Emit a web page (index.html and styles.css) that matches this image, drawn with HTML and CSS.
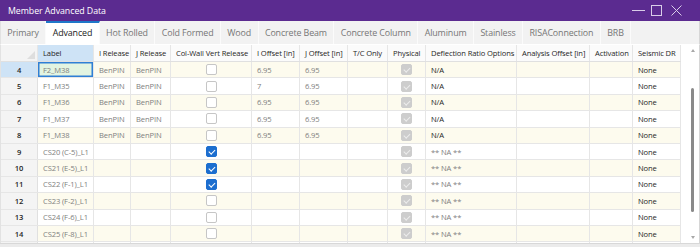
FILE: index.html
```html
<!DOCTYPE html>
<html lang="en">
<head>
    <meta charset="UTF-8">
    <meta name="viewport" content="width=device-width, initial-scale=1.0">
    <title>Member Advanced Data</title>
    <link rel="stylesheet" href="styles.css">
</head>
<body>

<div class="window">

    <!-- Title Bar -->
    <div class="title-bar">
        <span class="title">Member Advanced Data</span>
        <div class="window-controls">
            <svg class="ctl-min" width="13" height="11" viewBox="0 0 13 11"><path d="M0 5.5 H13" stroke="#d9cde8" stroke-width="1"/></svg>
            <svg class="ctl-max" width="11" height="11" viewBox="0 0 11 11"><rect x="0.5" y="0.5" width="10" height="10" fill="none" stroke="#d9cde8" stroke-width="1"/></svg>
            <svg class="ctl-close" width="11" height="11" viewBox="0 0 11 11"><path d="M0.5 0.5 L10.5 10.5 M10.5 0.5 L0.5 10.5" stroke="#d9cde8" stroke-width="1"/></svg>
        </div>
    </div>

    <!-- Tabs -->
    <div class="tabs">
        <div class="tab">Primary</div>
        <div class="tab active">Advanced</div>
        <div class="tab">Hot Rolled</div>
        <div class="tab">Cold Formed</div>
        <div class="tab">Wood</div>
        <div class="tab">Concrete Beam</div>
        <div class="tab">Concrete Column</div>
        <div class="tab">Aluminum</div>
        <div class="tab">Stainless</div>
        <div class="tab">RISAConnection</div>
        <div class="tab">BRB</div>
    </div>

    <!-- Grid -->
    <div class="grid-area">
        <div class="grid">
            <div class="grid-row header-row">
                <div class="cell corner"></div>
                <div class="cell active-col">Label</div>
                <div class="cell">I Release</div>
                <div class="cell">J Release</div>
                <div class="cell">Col-Wall Vert Release</div>
                <div class="cell">I Offset [in]</div>
                <div class="cell">J Offset [in]</div>
                <div class="cell">T/C Only</div>
                <div class="cell">Physical</div>
                <div class="cell">Deflection Ratio Options</div>
                <div class="cell">Analysis Offset [in]</div>
                <div class="cell">Activation</div>
                <div class="cell">Seismic DR</div>
            </div>

            <div class="grid-row cream">
                <div class="cell row-num active-row">4</div>
                <div class="cell muted current">F2_M38</div>
                <div class="cell muted">BenPIN</div>
                <div class="cell muted">BenPIN</div>
                <div class="cell center"><span class="check"></span></div>
                <div class="cell muted">6.95</div>
                <div class="cell muted">6.95</div>
                <div class="cell"></div>
                <div class="cell center"><span class="check disabled"></span></div>
                <div class="cell">N/A</div>
                <div class="cell"></div>
                <div class="cell"></div>
                <div class="cell">None</div>
            </div>
            <div class="grid-row">
                <div class="cell row-num">5</div>
                <div class="cell muted">F1_M35</div>
                <div class="cell muted">BenPIN</div>
                <div class="cell muted">BenPIN</div>
                <div class="cell center"><span class="check"></span></div>
                <div class="cell muted">7</div>
                <div class="cell muted">6.95</div>
                <div class="cell"></div>
                <div class="cell center"><span class="check disabled"></span></div>
                <div class="cell">N/A</div>
                <div class="cell"></div>
                <div class="cell"></div>
                <div class="cell">None</div>
            </div>
            <div class="grid-row cream">
                <div class="cell row-num">6</div>
                <div class="cell muted">F1_M36</div>
                <div class="cell muted">BenPIN</div>
                <div class="cell muted">BenPIN</div>
                <div class="cell center"><span class="check"></span></div>
                <div class="cell muted">6.95</div>
                <div class="cell muted">6.95</div>
                <div class="cell"></div>
                <div class="cell center"><span class="check disabled"></span></div>
                <div class="cell">N/A</div>
                <div class="cell"></div>
                <div class="cell"></div>
                <div class="cell">None</div>
            </div>
            <div class="grid-row">
                <div class="cell row-num">7</div>
                <div class="cell muted">F1_M37</div>
                <div class="cell muted">BenPIN</div>
                <div class="cell muted">BenPIN</div>
                <div class="cell center"><span class="check"></span></div>
                <div class="cell muted">6.95</div>
                <div class="cell muted">6.95</div>
                <div class="cell"></div>
                <div class="cell center"><span class="check disabled"></span></div>
                <div class="cell">N/A</div>
                <div class="cell"></div>
                <div class="cell"></div>
                <div class="cell">None</div>
            </div>
            <div class="grid-row cream">
                <div class="cell row-num">8</div>
                <div class="cell muted">F1_M38</div>
                <div class="cell muted">BenPIN</div>
                <div class="cell muted">BenPIN</div>
                <div class="cell center"><span class="check"></span></div>
                <div class="cell muted">6.95</div>
                <div class="cell muted">6.95</div>
                <div class="cell"></div>
                <div class="cell center"><span class="check disabled"></span></div>
                <div class="cell">N/A</div>
                <div class="cell"></div>
                <div class="cell"></div>
                <div class="cell">None</div>
            </div>
            <div class="grid-row">
                <div class="cell row-num">9</div>
                <div class="cell muted">CS20 (C-5)_L1</div>
                <div class="cell"></div>
                <div class="cell"></div>
                <div class="cell center"><span class="check on"></span></div>
                <div class="cell"></div>
                <div class="cell"></div>
                <div class="cell"></div>
                <div class="cell center"><span class="check disabled"></span></div>
                <div class="cell muted">** NA **</div>
                <div class="cell"></div>
                <div class="cell"></div>
                <div class="cell">None</div>
            </div>
            <div class="grid-row cream">
                <div class="cell row-num">10</div>
                <div class="cell muted">CS21 (E-5)_L1</div>
                <div class="cell"></div>
                <div class="cell"></div>
                <div class="cell center"><span class="check on"></span></div>
                <div class="cell"></div>
                <div class="cell"></div>
                <div class="cell"></div>
                <div class="cell center"><span class="check disabled"></span></div>
                <div class="cell muted">** NA **</div>
                <div class="cell"></div>
                <div class="cell"></div>
                <div class="cell">None</div>
            </div>
            <div class="grid-row">
                <div class="cell row-num">11</div>
                <div class="cell muted">CS22 (F-1)_L1</div>
                <div class="cell"></div>
                <div class="cell"></div>
                <div class="cell center"><span class="check on"></span></div>
                <div class="cell"></div>
                <div class="cell"></div>
                <div class="cell"></div>
                <div class="cell center"><span class="check disabled"></span></div>
                <div class="cell muted">** NA **</div>
                <div class="cell"></div>
                <div class="cell"></div>
                <div class="cell">None</div>
            </div>
            <div class="grid-row cream">
                <div class="cell row-num">12</div>
                <div class="cell muted">CS23 (F-2)_L1</div>
                <div class="cell"></div>
                <div class="cell"></div>
                <div class="cell center"><span class="check"></span></div>
                <div class="cell"></div>
                <div class="cell"></div>
                <div class="cell"></div>
                <div class="cell center"><span class="check disabled"></span></div>
                <div class="cell muted">** NA **</div>
                <div class="cell"></div>
                <div class="cell"></div>
                <div class="cell">None</div>
            </div>
            <div class="grid-row">
                <div class="cell row-num">13</div>
                <div class="cell muted">CS24 (F-6)_L1</div>
                <div class="cell"></div>
                <div class="cell"></div>
                <div class="cell center"><span class="check"></span></div>
                <div class="cell"></div>
                <div class="cell"></div>
                <div class="cell"></div>
                <div class="cell center"><span class="check disabled"></span></div>
                <div class="cell muted">** NA **</div>
                <div class="cell"></div>
                <div class="cell"></div>
                <div class="cell">None</div>
            </div>
            <div class="grid-row cream">
                <div class="cell row-num">14</div>
                <div class="cell muted">CS25 (F-8)_L1</div>
                <div class="cell"></div>
                <div class="cell"></div>
                <div class="cell center"><span class="check"></span></div>
                <div class="cell"></div>
                <div class="cell"></div>
                <div class="cell"></div>
                <div class="cell center"><span class="check disabled"></span></div>
                <div class="cell muted">** NA **</div>
                <div class="cell"></div>
                <div class="cell"></div>
                <div class="cell">None</div>
            </div>
            <div class="grid-row">
                <div class="cell row-num"></div>
                <div class="cell"></div>
                <div class="cell"></div>
                <div class="cell"></div>
                <div class="cell center"><span class="check"></span></div>
                <div class="cell"></div>
                <div class="cell"></div>
                <div class="cell"></div>
                <div class="cell center"><span class="check disabled"></span></div>
                <div class="cell"></div>
                <div class="cell"></div>
                <div class="cell"></div>
                <div class="cell"></div>
            </div>
        </div>

        <!-- Vertical Scrollbar -->
        <div class="v-scroll">
            <span class="arrow up"></span>
            <span class="thumb"></span>
            <span class="arrow down"></span>
        </div>
    </div>

    <!-- Horizontal Scrollbar edge -->
    <div class="h-scroll"></div>
</div>

</body>
</html>
```

FILE: styles.css
```css
/* Colors */
:root {
    --title-bg: #5b2b90;
    --tab-bg: #f2f2f2;
    --line: #e6e6e6;
    --cream: #fdfbee;
    --head-bg: #fbfbfb;
    --sel-blue: #cee3f6;
    --text: #262626;
    --muted: #808080;
}

body {
    margin: 0;
    font-family: "Open Sans", "Noto Sans", sans-serif;
    background-color: #ffffff;
    color: var(--text);
    overflow: hidden;
}

.window {
    width: 700px;
    height: 247px;
    display: flex;
    flex-direction: column;
}

/* Title Bar */
.title-bar {
    height: 21px;
    flex-shrink: 0;
    background-color: var(--title-bg);
    color: #ffffff;
    display: flex;
    align-items: center;
    justify-content: space-between;
    padding: 0 18px 0 8px;
}

.title {
    font-size: 8.8px;
    letter-spacing: -0.05px;
}

.window-controls {
    display: flex;
    align-items: center;
}

.ctl-min {
    margin-right: 6px;
}

.ctl-max {
    margin-right: 9px;
}

/* Tabs */
.tabs {
    height: 23px;
    flex-shrink: 0;
    display: flex;
    background-color: var(--tab-bg);
    border-left: 1px solid #e2e2e2;
    border-right: 1px solid #d6d6d6;
}

.tab {
    display: flex;
    align-items: center;
    padding: 0 6.5px 0 6.3px;
    font-size: 8.9px;
    letter-spacing: -0.12px;
    color: #767676;
    border-right: 1px solid #fbfbfb;
}

.tab.active {
    background-color: #ffffff;
    color: #1a1a1a;
    border-top: 2px solid #1f77c9;
    padding-bottom: 2px;
}

/* Grid */
.grid-area {
    height: 199px;
    flex-shrink: 0;
    display: flex;
    overflow: hidden;
    border-top: 1px solid #ffffff;
    box-sizing: border-box;
    border-left: 1px solid #e2e2e2;
    border-right: 1px solid #d6d6d6;
}

.grid {
    width: 680px;
    flex-shrink: 0;
    overflow: hidden;
}

.grid-row {
    display: grid;
    grid-template-columns: 37px 56px 37px 40px 81px 48px 48px 40px 38px 91px 73px 43px 48px;
    height: 16.4px;
    box-sizing: border-box;
    border-bottom: 1px solid var(--line);
}

.grid-row.cream {
    background-color: var(--cream);
}

.header-row {
    height: 17px;
    background-color: var(--head-bg);
    border-bottom-color: #e0e0e0;
}

.cell {
    display: flex;
    align-items: center;
    padding-left: 5px;
    font-size: 7.6px;
    letter-spacing: -0.12px;
    white-space: nowrap;
    overflow: hidden;
    border-right: 1px solid var(--line);
}

.cell.center {
    justify-content: center;
    padding-left: 0;
}

.cell.muted {
    color: var(--muted);
}

.header-row .cell {
    color: #1f1f1f;
}

.cell.active-col {
    background-color: var(--sel-blue);
}

.cell.corner {
    position: relative;
    background-color: #f4f4f4;
}

.cell.corner::after {
    content: "";
    position: absolute;
    right: 2px;
    bottom: 2px;
    border-left: 8px solid transparent;
    border-bottom: 8px solid #dedede;
}

.row-num {
    justify-content: center;
    padding-left: 0;
    background-color: #f4f4f4;
    font-weight: 600;
    color: #262626;
    border-right-color: #e0e0e0;
}

.row-num.active-row {
    background-color: var(--sel-blue);
}

.cell.current {
    background-color: #e3f4e1;
    box-shadow: inset 0 0 0 1.5px #2f7fd5;
}

/* Checkboxes */
.check {
    position: relative;
    width: 11px;
    height: 11px;
    box-sizing: border-box;
    border: 1px solid #c6c6c6;
    border-radius: 2px;
    background-color: #ffffff;
}

.check.on {
    background-color: #1c6ecf;
    border-color: #1c6ecf;
}

.check.disabled {
    background-color: #cdcdcd;
    border-color: #cdcdcd;
}

.check.on::after,
.check.disabled::after {
    content: "";
    position: absolute;
    left: 3px;
    top: 1px;
    width: 2.5px;
    height: 5px;
    border: solid #ffffff;
    border-width: 0 1.1px 1.1px 0;
    transform: rotate(45deg);
}

.check.disabled::after {
    border-color: #ececec;
}

/* Vertical Scrollbar */
.v-scroll {
    flex: 1;
    display: flex;
    flex-direction: column;
    align-items: center;
    padding: 4px 0 4px 5px;
    background-color: #ffffff;
}

.arrow {
    width: 0;
    height: 0;
    border-left: 2.5px solid transparent;
    border-right: 2.5px solid transparent;
}

.arrow.up {
    border-bottom: 3px solid #a8a8a8;
}

.arrow.down {
    margin-top: auto;
    border-top: 3px solid #a8a8a8;
}

.thumb {
    width: 3px;
    height: 124px;
    margin-top: 36px;
    border-radius: 2px;
    background-color: #8a8a8a;
}

/* Horizontal Scrollbar edge */
.h-scroll {
    flex: 1;
    background-color: #ebebeb;
    border-top: 1px solid #d8d8d8;
}
```
